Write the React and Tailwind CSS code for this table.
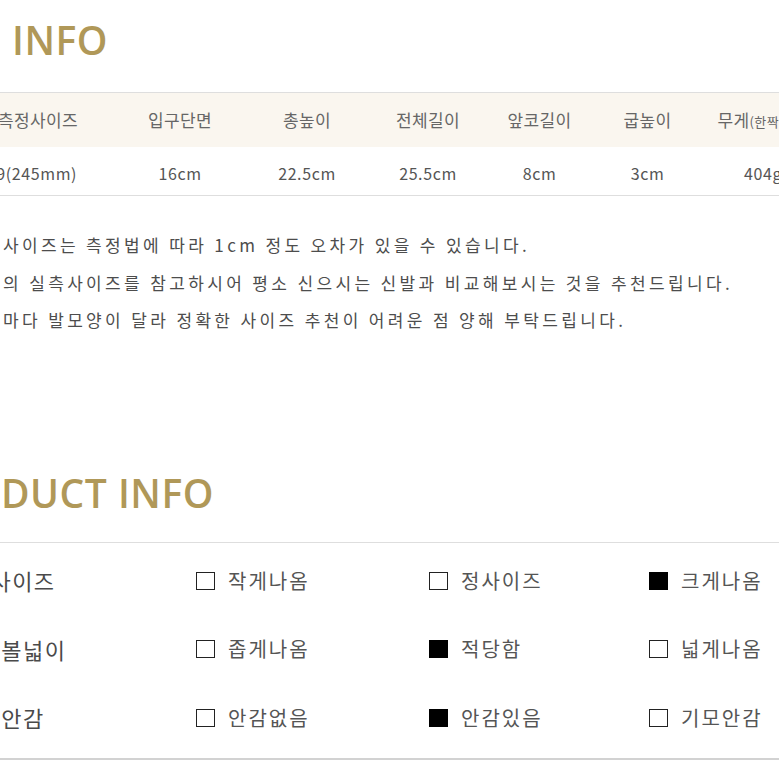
import React from "react";

const specHead = ["측정사이즈", "입구단면", "총높이", "전체길이", "앞코길이", "굽높이"];
const specData = ["39(245mm)", "16cm", "22.5cm", "25.5cm", "8cm", "3cm", "404g"];

const notes = [
  "사이즈는 측정법에 따라 1cm 정도 오차가 있을 수 있습니다.",
  "의 실측사이즈를 참고하시어 평소 신으시는 신발과 비교해보시는 것을 추천드립니다.",
  "마다 발모양이 달라 정확한 사이즈 추천이 어려운 점 양해 부탁드립니다.",
];

const productRows = [
  {
    label: "사이즈",
    options: [
      {text: "작게나옴", on: false},
      {text: "정사이즈", on: false},
      {text: "크게나옴", on: true},
    ],
  },
  {
    label: "발볼넓이",
    options: [
      {text: "좁게나옴", on: false},
      {text: "적당함", on: true},
      {text: "넓게나옴", on: false},
    ],
  },
  {
    label: "안감",
    options: [
      {text: "안감없음", on: false},
      {text: "안감있음", on: true},
      {text: "기모안감", on: false},
    ],
  },
];

const gridCols = "grid grid-cols-[150px_134px_120px_122px_101px_115px_116px] ml-[-37px] w-[858px]";

const Title = ({children, cls}) => (
  <h2
    className={`font-['Open_Sans',sans-serif] font-semibold text-[39px] leading-[39px] tracking-[0.5px] text-[#b09858] whitespace-nowrap ${cls}`}
  >
    {children}
  </h2>
);

const Check = ({on}) => (
  <span
    className={`w-[19px] h-[18px] shrink-0 ${
      on ? "bg-black" : "border-[1.5px] border-[#222] bg-white"
    }`}
  />
);

const App = () => {
  return (
    <div className="w-[779px] h-[779px] overflow-hidden bg-white font-['Noto_Sans_CJK_KR',sans-serif]">
      {/* size info */}
      <div className="h-[92px] pt-[20px]">
        <Title cls="pl-[12px]">INFO</Title>
      </div>

      <div className="border-t border-b border-[#dedede]">
        <div className={`${gridCols} h-[54px] bg-[#faf6ef] items-center text-[17px] tracking-[0.4px] text-[#666]`}>
          {specHead.map((h, i) => (
            <div key={i} className="flex justify-center whitespace-nowrap">
              {h}
            </div>
          ))}
          <div className="flex justify-center items-baseline whitespace-nowrap">
            무게<span className="text-[13px]">(한짝기준)</span>
          </div>
        </div>
        <div className={`${gridCols} h-[48px] pt-[3px] items-center text-[16px] tracking-[0.6px] text-[#555]`}>
          {specData.map((d, i) => (
            <div
              key={i}
              className={`flex justify-center whitespace-nowrap ${i === 0 ? "pr-[12px]" : ""}`}
            >
              {d}
            </div>
          ))}
        </div>
      </div>

      <div className="pt-[30px] pl-[3px] text-[17px] leading-[37.5px] tracking-[3.35px] text-[#4d4d4d]">
        {notes.map((n, i) => (
          <p key={i} className="whitespace-nowrap">
            {n}
          </p>
        ))}
      </div>

      {/* product info */}
      <div className="mt-[134px] h-[69px]">
        <Title cls="pl-[1px]">DUCT INFO</Title>
      </div>

      <div className="border-t border-[#dedede] pt-[4px] pb-[6px] border-b-2 border-b-[#d2d2d2]">
        {productRows.map((row, i) => (
          <div
            key={i}
            className="grid grid-cols-[196px_233px_220px_1fr] h-[68.5px] items-center"
          >
            <div className="w-[46px] flex justify-center whitespace-nowrap text-[22px] tracking-[1.5px] text-[#4a4a4a]">
              {row.label}
            </div>
            {row.options.map((o, j) => (
              <div key={j} className="flex items-center gap-[13px] whitespace-nowrap">
                <Check on={o.on} />
                <span className="text-[20px] tracking-[2px] text-[#555]">{o.text}</span>
              </div>
            ))}
          </div>
        ))}
      </div>
    </div>
  );
};

export default App;
